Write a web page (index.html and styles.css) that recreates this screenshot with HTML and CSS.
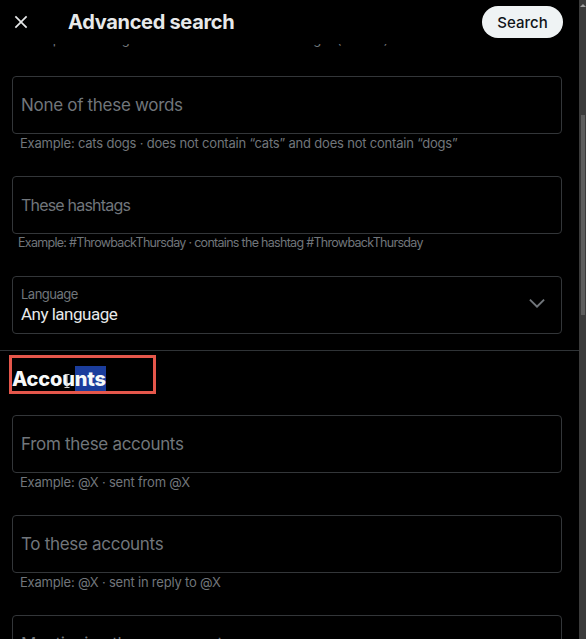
FILE: index.html
```html
<!doctype html>
<html lang="en">
<head>
    <meta charset="UTF-8">
    <meta name="viewport" content="width=device-width, initial-scale=1.0">
    <title>Advanced search</title>
    <link rel="stylesheet" href="styles.css">
</head>
<body>
<div class="window">
    <div class="screen">
        <header class="topbar">
            <button class="close" aria-label="Close">
                <svg viewBox="0 0 24 24" width="20" height="20"><path d="M10.59 12L4.54 5.96l1.42-1.42L12 10.59l6.04-6.05 1.42 1.42L13.41 12l6.05 6.04-1.42 1.42L12 13.41l-6.04 6.05-1.42-1.42L10.59 12z"/></svg>
            </button>
            <h1 class="title">Advanced search</h1>
            <button class="search-btn">Search</button>
        </header>

        <div class="scroll">
            <p class="hint hint-cut">Example: cats dogs · contains either “cats” or “dogs” (or both)</p>

            <div class="group">
                <div class="field"><span class="placeholder">None of these words</span></div>
                <p class="hint">Example: cats dogs · does not contain “cats” and does not contain “dogs”</p>
            </div>

            <div class="group">
                <div class="field"><span class="placeholder narrow">These hashtags</span></div>
                <p class="hint narrow">Example: #ThrowbackThursday · contains the hashtag #ThrowbackThursday</p>
            </div>

            <div class="group group-last">
                <div class="field select">
                    <div class="select-text">
                        <span class="select-label">Language</span>
                        <span class="select-value">Any language</span>
                    </div>
                    <svg class="chevron" viewBox="0 0 24 24" width="22" height="22"><path d="M3.543 8.96l1.414-1.42L12 14.59l7.043-7.05 1.414 1.42L12 17.41 3.543 8.96z"/></svg>
                </div>
            </div>

            <hr class="divider">

            <div class="section-head">
                <h2 class="section-title">Accou<span class="selected">nts</span></h2>
                <div class="annotation"></div>
                <svg class="ibeam" viewBox="0 0 6 14" width="6" height="14"><path d="M0.5 0.5h5M3 0.5v13M0.5 13.5h5" stroke="#cfcfcf" stroke-width="1" fill="none"/></svg>
            </div>

            <div class="group">
                <div class="field"><span class="placeholder">From these accounts</span></div>
                <p class="hint">Example: @X · sent from @X</p>
            </div>

            <div class="group">
                <div class="field"><span class="placeholder">To these accounts</span></div>
                <p class="hint">Example: @X · sent in reply to @X</p>
            </div>

            <div class="group">
                <div class="field"><span class="placeholder">Mentioning these accounts</span></div>
                <p class="hint">Example: @SFBART @Caltrain · mentions @SFBART or mentions @Caltrain</p>
            </div>
        </div>
    </div>

    <div class="scrollbar">
        <span class="arrow"></span>
        <div class="thumb"></div>
    </div>
</div>
</body>
</html>
```

FILE: styles.css
```css
html, body {
    margin: 0;
    padding: 0;
    background-color: #000;
    height: 100%;
}

body {
    font-family: Inter, "Noto Sans", sans-serif;
    color: #e7e9ea;
    overflow: hidden;
}

.window {
    display: flex;
    height: 639px;
}

.screen {
    flex: 1;
    display: flex;
    flex-direction: column;
    min-width: 0;
}

.topbar {
    height: 44px;
    display: flex;
    align-items: center;
    padding: 0 16px 0 11px;
    background-color: #000;
    flex-shrink: 0;
}

.close {
    width: 20px;
    height: 20px;
    padding: 0;
    border: none;
    background: none;
    display: flex;
    align-items: center;
    justify-content: center;
}

.close svg {
    fill: #e7e9ea;
}

.title {
    margin: 0 0 0 37px;
    font-size: 20px;
    font-weight: 700;
    line-height: 24px;
    letter-spacing: -0.3px;
    flex: 1;
}

.search-btn {
    height: 32px;
    width: 81px;
    border: none;
    border-radius: 16px;
    background-color: #eff3f4;
    color: #0f1419;
    font-family: inherit;
    font-size: 15px;
    font-weight: 500;
}

.scroll {
    flex: 1;
    overflow: hidden;
    padding: 0 17px 0 12px;
}

.hint {
    margin: 1px 0 0;
    padding-left: 8px;
    font-size: 13px;
    line-height: 16px;
    letter-spacing: -0.2px;
    color: #71767b;
    white-space: nowrap;
}

.hint-cut {
    margin: -13px 0 29px;
}

.hint.narrow {
    padding-left: 6px;
    font-size: 12.5px;
    letter-spacing: -0.7px;
}

.group {
    margin-bottom: 25px;
}

.group-last {
    margin-bottom: 16px;
}

.field {
    height: 58px;
    box-sizing: border-box;
    border: 1px solid #333639;
    border-radius: 4px;
    display: flex;
    align-items: center;
    padding: 0 8px;
}

.placeholder {
    font-size: 17px;
    letter-spacing: -0.3px;
    color: #71767b;
}

.placeholder.narrow {
    font-size: 16px;
    letter-spacing: -0.8px;
}

.select {
    justify-content: space-between;
    padding-right: 13px;
}

.select-text {
    display: flex;
    flex-direction: column;
    padding-top: 2px;
}

.select-label {
    font-size: 13px;
    line-height: 16px;
    letter-spacing: -0.5px;
    color: #71767b;
}

.select-value {
    font-family: Roboto, sans-serif;
    font-size: 17px;
    line-height: 24px;
    letter-spacing: -0.5px;
    color: #e7e9ea;
}

.chevron {
    fill: #71767b;
    margin-bottom: 4px;
}

.divider {
    border: none;
    border-top: 1px solid #2f3336;
    margin: 0 -17px 0 -12px;
}

.section-head {
    position: relative;
    margin: 16px 0 24px;
}

.section-title {
    margin: 0;
    font-size: 20px;
    font-weight: 800;
    line-height: 24px;
    letter-spacing: -0.2px;
    color: #f7f9f9;
}

.selected {
    background-color: #1b3d9c;
    padding: 1px 0;
}

.annotation {
    position: absolute;
    left: -3px;
    top: -12px;
    width: 147px;
    height: 39px;
    box-sizing: border-box;
    border: 3px solid #e5574b;
}

.ibeam {
    position: absolute;
    left: 52px;
    top: 7px;
}

.scrollbar {
    width: 7px;
    background-color: #3b3b3b;
    flex-shrink: 0;
}

.arrow {
    display: block;
    width: 0;
    height: 0;
    margin: 4px auto 0;
    border-left: 3px solid transparent;
    border-right: 3px solid transparent;
    border-bottom: 3px solid #a0a0a0;
}

.thumb {
    margin: 108px 1px 0 2px;
    height: 200px;
    background-color: #5e5e5e;
}
```
